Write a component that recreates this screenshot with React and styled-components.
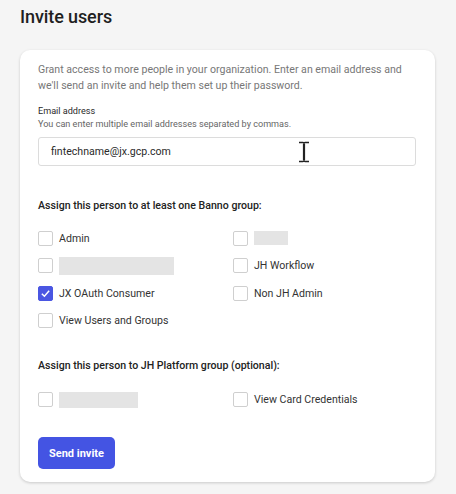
import React from "react";
import styled, { createGlobalStyle } from "styled-components";

const Global = createGlobalStyle`
  html, body { margin: 0; padding: 0; background: #f5f5f5; }
  body { font-family: Roboto, "Liberation Sans", Arial, sans-serif; color: #222; }
  * { box-sizing: border-box; }
`;

const Page = styled.div`
  width: 456px;
  height: 494px;
  padding: 4px 21px 0 20px;
  overflow: hidden;
`;

const Title = styled.h1`
  margin: 0;
  font-size: 18px;
  line-height: 26px;
  font-weight: 500;
  color: #1f1f1f;
  letter-spacing: -0.1px;
`;

const Card = styled.div`
  margin-top: 20px;
  width: 415px;
  height: 432px;
  background: #fff;
  border-radius: 10px;
  box-shadow: 0 1px 3px rgba(0, 0, 0, 0.18);
  padding: 12px 19px 13px 18px;
  display: flex;
  flex-direction: column;
`;

const Intro = styled.p`
  margin: 0;
  font-size: 10.6px;
  line-height: 16px;
  color: #777;
  white-space: nowrap;
`;

const Label = styled.div`
  margin-top: 11px;
  font-size: 9.1px;
  line-height: 13px;
  color: #2a2a2a;
`;

const Hint = styled.div`
  font-size: 9.1px;
  line-height: 13px;
  color: #666;
`;

const InputWrap = styled.div`
  position: relative;
  margin-top: 6px;
  height: 29px;
  border: 1px solid #dcdcdc;
  border-radius: 3px;
  display: flex;
  align-items: center;
  padding-left: 12px;
  font-size: 10.6px;
  color: #2a2a2a;
`;

const Cursor = styled.svg`
  position: absolute;
  left: 259px;
  top: 3px;
`;

const Heading = styled.div`
  margin-top: ${(p) => p.$mt}px;
  font-size: 10.6px;
  line-height: 16px;
  font-weight: 500;
  color: #222;
`;

const Grid = styled.div`
  margin-top: ${(p) => p.$mt}px;
  display: grid;
  grid-template-columns: 195px 1fr;
  grid-auto-rows: 27.3px;
`;

const Item = styled.div`
  display: flex;
  align-items: center;
  gap: 6px;
  font-size: 10.6px;
  color: #333;
`;

const Box = styled.span`
  width: 15px;
  height: 15px;
  border-radius: 2px;
  border: 1px solid ${(p) => (p.$checked ? "#4a56e2" : "#cfcfcf")};
  background: ${(p) => (p.$checked ? "#4a56e2" : "#fff")};
  display: inline-flex;
  align-items: center;
  justify-content: center;
  flex: none;
`;

const Redacted = styled.span`
  display: block;
  width: ${(p) => p.$w}px;
  height: ${(p) => p.$h}px;
  background: #e4e4e4;
`;

const Button = styled.button`
  margin-top: 24px;
  align-self: flex-start;
  width: 77px;
  height: 32px;
  border: none;
  border-radius: 5px;
  background: #4454e3;
  color: #fff;
  font-family: inherit;
  font-size: 11px;
  font-weight: 700;
  padding: 0;
`;

const Check = ({ checked, label, redact }) => (
  <Item>
    <Box $checked={checked}>
      {checked && (
        <svg width="11" height="11" viewBox="0 0 12 12">
          <path d="M2 6.3 L4.8 9 L10 3" fill="none" stroke="#fff" strokeWidth="1.6" />
        </svg>
      )}
    </Box>
    {redact ? <Redacted $w={redact[0]} $h={redact[1]} /> : label}
  </Item>
);

export default function App() {
  return (
    <Page>
      <Global />
      <Title>Invite users</Title>
      <Card>
        <Intro>
          Grant access to more people in your organization. Enter an email address and
          <br />
          we'll send an invite and help them set up their password.
        </Intro>
        <Label>Email address</Label>
        <Hint>You can enter multiple email addresses separated by commas.</Hint>
        <InputWrap>
          fintechname@jx.gcp.com
          <Cursor width="12" height="22" viewBox="0 0 12 22">
            <path d="M1 1.5 H5 Q6 1.5 6 2.5 Q6 1.5 7 1.5 H11 M6 2.5 V19.5 M1 20.5 H5 Q6 20.5 6 19.5 Q6 20.5 7 20.5 H11" fill="none" stroke="#222" strokeWidth="1.3" />
            <path d="M6 3 V19" stroke="#222" strokeWidth="2.2" />
          </Cursor>
        </InputWrap>
        <Heading $mt={32}>Assign this person to at least one Banno group:</Heading>
        <Grid $mt={11}>
          <Check label="Admin" />
          <Check redact={[34, 14]} />
          <Check redact={[115, 18]} />
          <Check label="JH Workflow" />
          <Check checked label="JX OAuth Consumer" />
          <Check label="Non JH Admin" />
          <Check label="View Users and Groups" />
        </Grid>
        <Heading $mt={24.5}>Assign this person to JH Platform group (optional):</Heading>
        <Grid $mt={11.5}>
          <Check redact={[79, 16]} />
          <Check label="View Card Credentials" />
        </Grid>
        <Button>Send invite</Button>
      </Card>
    </Page>
  );
}
